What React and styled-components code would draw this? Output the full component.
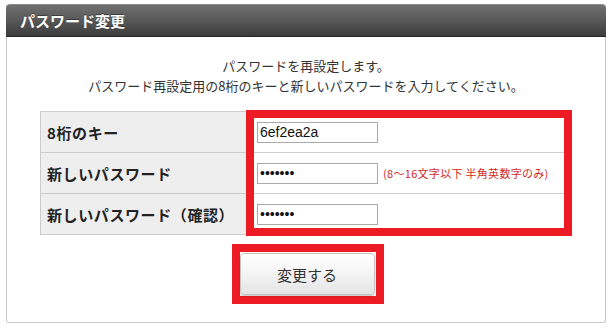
import React from "react";
import styled, { createGlobalStyle } from "styled-components";

const Global = createGlobalStyle`
  html, body { margin: 0; padding: 0; background: #ffffff; }
  body { font-family: "Noto Sans CJK JP", "Noto Sans", sans-serif; color: #333; }
`;

const Panel = styled.section`
  width: 600px;
  margin: 4px 0 0 6px;
  box-sizing: border-box;
`;

const Header = styled.h2`
  margin: 0;
  height: 33px;
  box-sizing: border-box;
  padding: 0 0 0 14px;
  display: flex;
  align-items: center;
  border-radius: 4px 4px 0 0;
  background: linear-gradient(#707070 0%, #5a5a5a 45%, #3c3c3c 100%);
  border-top: 1px solid #8a8a8a;
  border-bottom: 1px solid #262626;
  color: #ffffff;
  font-size: 15px;
  font-weight: bold;
  text-shadow: 0 -1px 0 rgba(0, 0, 0, 0.4);
`;

const Body = styled.div`
  border: 1px solid #c8c8c8;
  border-top: none;
  border-radius: 0 0 3px 3px;
  padding: 19px 0 18px;
  display: flex;
  flex-direction: column;
  align-items: center;
`;

const Intro = styled.p`
  margin: 0;
  text-align: center;
  font-size: 13px;
  line-height: 20px;
  color: #333;
`;

const Table = styled.div`
  align-self: flex-start;
  margin: 15px 0 0 33px;
  width: 530px;
  display: flex;
  border-top: 1px solid #cccccc;
  border-left: 1px solid #cccccc;
  border-right: 1px solid #cccccc;
`;

const Column = styled.div`
  display: flex;
  flex-direction: column;
  width: ${(p) => p.$width || "auto"};
  flex: ${(p) => (p.$grow ? 1 : "none")};
  position: relative;
  background: ${(p) => p.$bg || "#ffffff"};
`;

const Annotated = styled(Column)`
  &::after {
    content: "";
    position: absolute;
    top: -2px;
    bottom: -1px;
    left: -4px;
    right: -1px;
    border: 8px solid #ed1c24;
    pointer-events: none;
  }
`;

const LabelCell = styled.div`
  height: 40px;
  border-bottom: 1px solid #cccccc;
  display: flex;
  align-items: center;
  padding-left: 6px;
  font-size: 15px;
  letter-spacing: 0.6px;
  font-weight: bold;
  color: #222;
  white-space: nowrap;
`;

const FieldCell = styled.div`
  height: 40px;
  border-bottom: 1px solid #cccccc;
  display: flex;
  align-items: center;
  padding-left: 7px;
  gap: 5px;
`;

const Input = styled.input`
  width: 121px;
  height: 21px;
  box-sizing: border-box;
  margin: 0;
  padding: 0 2px;
  border: 1px solid #aaaaaa;
  background: #fff;
  font-family: "Liberation Sans", Arial, sans-serif;
  font-size: 14px;
  color: #111;
  outline: none;
`;

const Hint = styled.span`
  font-size: 11px;
  letter-spacing: 0.3px;
  color: #d42a1e;
  white-space: nowrap;
`;

const ButtonMark = styled.div`
  margin-top: 9px;
  margin-left: 3px;
  border: 8px solid #ed1c24;
  padding: 1px 1px 1px 0;
  display: inline-flex;
`;

const Button = styled.button`
  width: 135px;
  height: 42px;
  box-sizing: border-box;
  border: 1px solid #c4c4c4;
  border-radius: 4px;
  background: linear-gradient(#ffffff 0%, #f4f4f4 50%, #e4e4e4 100%);
  box-shadow: 0 1px 2px rgba(0, 0, 0, 0.25);
  font-family: "Noto Sans CJK JP", "Noto Sans", sans-serif;
  font-size: 15px;
  color: #333;
  cursor: pointer;
`;

const rows = [
  { label: "8桁のキー", type: "text", value: "6ef2ea2a" },
  { label: "新しいパスワード", type: "password", value: "1234567", hint: "(8～16文字以下 半角英数字のみ)" },
  { label: "新しいパスワード（確認）", type: "password", value: "1234567" },
];

export default function App() {
  return (
    <>
      <Global />
      <Panel>
        <Header>パスワード変更</Header>
        <Body>
          <Intro>
            パスワードを再設定します。
            <br />
            パスワード再設定用の8桁のキーと新しいパスワードを入力してください。
          </Intro>
          <Table>
            <Column $width="209px" $bg="#eeeeee">
              {rows.map((r) => (
                <LabelCell key={r.label}>{r.label}</LabelCell>
              ))}
            </Column>
            <Annotated $grow>
              {rows.map((r) => (
                <FieldCell key={r.label}>
                  <Input type={r.type} defaultValue={r.value} readOnly />
                  {r.hint && <Hint>{r.hint}</Hint>}
                </FieldCell>
              ))}
            </Annotated>
          </Table>
          <ButtonMark>
            <Button type="button">変更する</Button>
          </ButtonMark>
        </Body>
      </Panel>
    </>
  );
}
